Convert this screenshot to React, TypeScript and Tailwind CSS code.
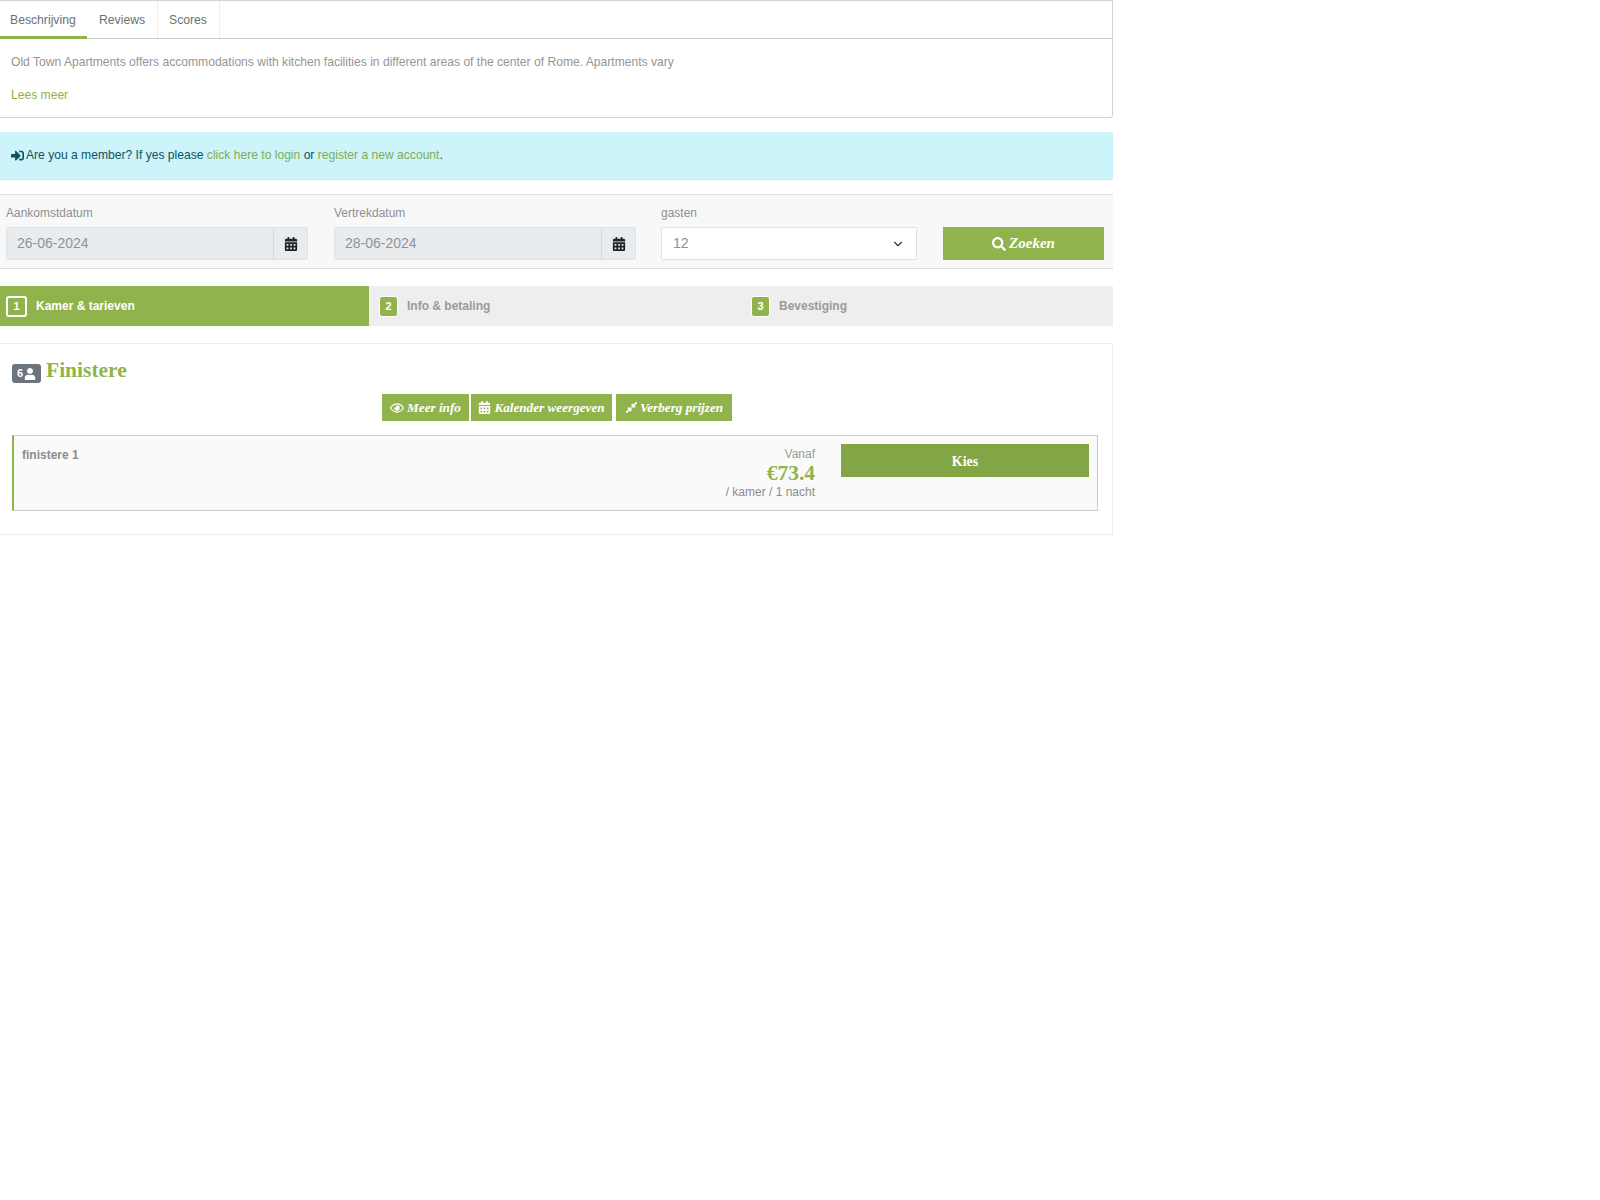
import { FaCalendarAlt, FaCompressAlt, FaRegEye, FaSearch, FaSignInAlt, FaUser } from "react-icons/fa"
import { FiChevronDown } from "react-icons/fi"

const sans = "font-['Liberation_Sans',Arial,sans-serif]"
const fancy = "font-['Liberation_Serif',serif] font-bold italic"

function DateField({ label, value }: { label: string; value: string }) {
  return (
    <div className="w-[302px]">
      <div className="text-[12px] leading-[16px] text-[#8f8f8f] mb-[6px]">{label}</div>
      <div className="flex h-[33px] rounded-[3px] border border-[#dfe3e6] bg-[#e9ecef]">
        <div className="flex-1 pl-[10px] text-[14px] leading-[30px] text-[#8f9296]">{value}</div>
        <div className="w-[34px] flex items-center justify-center border-l border-[#d6dade]">
          <FaCalendarAlt className="text-[14px] text-[#212529]" />
        </div>
      </div>
    </div>
  )
}

function Step({ num, label, active }: { num: number; label: string; active?: boolean }) {
  return (
    <div className={`flex-1 flex items-center ${active ? "bg-[#90b44b] pl-[6px]" : "pl-[10px]"}`}>
      <div
        className={
          active
            ? "w-[21px] h-[21px] rounded-[3px] border-2 border-white text-white text-[11px] font-bold flex items-center justify-center"
            : "w-[19px] h-[21px] rounded-[3px] border border-white bg-[#90b44b] text-white text-[11px] font-bold flex items-center justify-center"
        }
      >
        {num}
      </div>
      <div className={`ml-[9px] text-[12px] font-bold ${active ? "text-white" : "text-[#9a9a9a]"}`}>{label}</div>
    </div>
  )
}

export default function App() {
  return (
    <div className={`${sans} w-[1113px] bg-white`}>
      {/* Tabs + description */}
      <div className="border-t border-r border-b border-[#d4d4d4] h-[118px] rounded-br-[3px]">
        <div className="flex h-[38px] border-b border-[#c9c9c9] text-[12.2px] text-[#6f6f6f]">
          <div className="w-[87px] h-[38px] border-b-[3px] border-[#90b44b] pl-[10px] pt-[11px] leading-[16px]">Beschrijving</div>
          <div className="w-[71px] border-r border-[#eeeeee] pl-[12px] pt-[11px] leading-[16px]">Reviews</div>
          <div className="w-[62px] border-r border-[#eeeeee] pl-[11px] pt-[11px] leading-[16px]">Scores</div>
        </div>
        <p className="pl-[11px] pt-[15px] text-[12.1px] leading-[16px] text-[#959595]">
          Old Town Apartments offers accommodations with kitchen facilities in different areas of the center of Rome. Apartments vary
        </p>
        <p className="pl-[11px] pt-[17px] text-[12.1px] leading-[16px] text-[#8fb24a]">Lees meer</p>
      </div>

      {/* Member alert */}
      <div className="mt-[14px] h-[48px] bg-[#cdf3fb] border-b border-[#bdeaf4] flex items-center pl-[11px] text-[12.1px] text-[#0c5460]">
        <FaSignInAlt className="text-[13px] mr-[2px]" />
        <span>
          Are you a member? If yes please <span className="text-[#7fae54]">click here to login</span> or{" "}
          <span className="text-[#7fae54]">register a new account</span>.
        </span>
      </div>

      {/* Search bar */}
      <div className="mt-[14px] h-[75px] bg-[#f8f8f8] border-t border-b border-[#dcdcdc] flex pl-[6px] pt-[10px]">
        <DateField label="Aankomstdatum" value="26-06-2024" />
        <div className="ml-[26px]">
          <DateField label="Vertrekdatum" value="28-06-2024" />
        </div>
        <div className="ml-[25px] w-[256px]">
          <div className="text-[12px] leading-[16px] text-[#8f8f8f] mb-[6px]">gasten</div>
          <div className="flex items-center justify-between h-[33px] bg-white border border-[#dfe3e6] rounded-[2px] pl-[11px] pr-[11px] text-[14px] text-[#8f9296]">
            12
            <FiChevronDown className="text-[14px] text-[#343a40]" />
          </div>
        </div>
        <div className="ml-[26px] mt-[22px] w-[161px] h-[33px] bg-[#90b44b] flex items-center justify-center gap-[3px] text-white text-[15px]">
          <FaSearch className="text-[14px]" />
          <span className={fancy}>Zoeken</span>
        </div>
      </div>

      {/* Steps */}
      <div className="mt-[17px] h-[40px] flex bg-[#eeeeee]">
        <div className="w-[369px] flex">
          <Step num={1} label="Kamer & tarieven" active />
        </div>
        <div className="w-[372px] flex">
          <Step num={2} label="Info & betaling" />
        </div>
        <div className="flex-1 flex">
          <Step num={3} label="Bevestiging" />
        </div>
      </div>

      {/* Room card */}
      <div className="mt-[17px] h-[192px] border-t border-r border-b border-[#ececec] pl-[12px] pr-[14px]">
        <div className="flex items-end h-[40px] pb-[1px]">
          <div className="w-[29px] h-[19px] rounded-[3px] bg-[#6c757d] flex items-center justify-center gap-[1px] text-white text-[11px] font-bold">
            6
            <FaUser className="text-[12px]" />
          </div>
          <h2 className="ml-[5px] mt-[1px] text-[21.5px] leading-[26px] font-bold text-[#90b44b] font-['Liberation_Serif',serif]">Finistere</h2>
        </div>
        <div className="mt-[10px] ml-[370px] flex text-white text-[13.2px]">
          <div className="w-[87px] h-[27px] bg-[#90b44b] flex items-center justify-center gap-[3px]">
            <FaRegEye className="text-[14px]" />
            <span className={fancy}>Meer info</span>
          </div>
          <div className="ml-[2px] w-[141px] h-[27px] bg-[#90b44b] flex items-center justify-center gap-[3px]">
            <FaCalendarAlt className="text-[13px]" />
            <span className={fancy}>Kalender weergeven</span>
          </div>
          <div className="ml-[4px] w-[116px] h-[27px] bg-[#90b44b] flex items-center justify-center gap-[2px]">
            <FaCompressAlt className="text-[13px]" />
            <span className={fancy}>Verberg prijzen</span>
          </div>
        </div>
        <div className="mt-[14px] h-[76px] bg-[#fafafa] border border-[#cccccc] border-l-2 border-l-[#90b44b] flex pl-[8px] pr-[8px]">
          <div className="flex-1 pt-[11px] text-[12px] leading-[16px] font-bold text-[#8c8c8c]">finistere 1</div>
          <div className="w-[200px] text-right pt-[10px]">
            <div className="text-[12px] leading-[16px] text-[#9a9a9a]">Vanaf</div>
            <div className="text-[21.5px] leading-[22px] font-bold text-[#90b44b] font-['Liberation_Serif',serif]">€73.4</div>
            <div className="text-[12px] leading-[16px] text-[#8c8c8c]">/ kamer / 1 nacht</div>
          </div>
          <div className="ml-[26px] mt-[8px] pt-[1px] w-[248px] h-[33px] bg-[#84a546] flex items-center justify-center text-white text-[14px] font-bold font-['Liberation_Serif',serif]">
            Kies
          </div>
        </div>
      </div>
      <div className="h-[666px]" />
    </div>
  )
}
